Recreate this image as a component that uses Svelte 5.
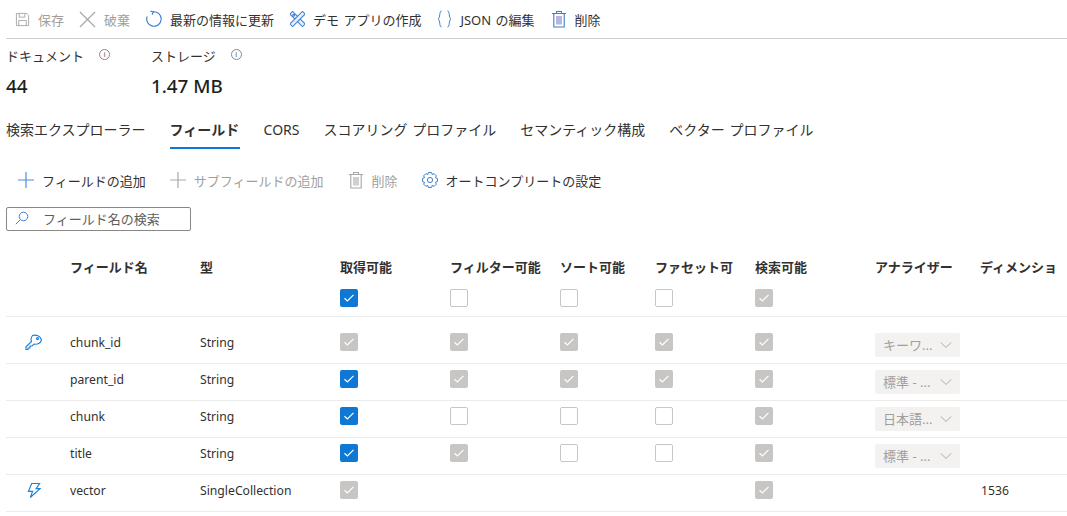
<script>
  const tabs = ['検索エクスプローラー', 'フィールド', 'CORS', 'スコアリング プロファイル', 'セマンティック構成', 'ベクター プロファイル'];
  const headers = ['', 'フィールド名', '型', '取得可能', 'フィルター可能', 'ソート可能', 'ファセット可', '検索可能', 'アナライザー', 'ディメンショ'];
  const rows = [
    { icon: 'key', name: 'chunk_id', type: 'String', checks: ['d', 'd', 'd', 'd', 'd'], an: 'キーワ...' },
    { name: 'parent_id', type: 'String', checks: ['c', 'd', 'd', 'd', 'd'], an: '標準 - ...' },
    { name: 'chunk', type: 'String', checks: ['c', 'e', 'e', 'e', 'd'], an: '日本語...' },
    { name: 'title', type: 'String', checks: ['c', 'd', 'e', 'e', 'd'], an: '標準 - ...' },
    { icon: 'bolt', name: 'vector', type: 'SingleCollection', checks: ['d', '', '', '', 'd'], dim: '1536' }
  ];

  function gearPath(cx, cy, outer, inner, teeth) {
    const pts = [];
    for (let i = 0; i < teeth; i++) {
      const step = (Math.PI * 2) / teeth;
      const a = i * step - Math.PI / 2;
      const o = [[-0.5, inner], [-0.27, outer], [0.27, outer], [0.5, inner]];
      for (const [f, r] of o) {
        const t = a + f * step;
        pts.push((cx + r * Math.cos(t)).toFixed(2) + ' ' + (cy + r * Math.sin(t)).toFixed(2));
      }
    }
    return 'M' + pts.join('L') + 'Z';
  }
  const gear = gearPath(8, 8, 7.6, 5.9, 8);
</script>

{#snippet box(kind)}
  {#if kind}
    <span class="box {kind}">
      {#if kind !== 'e'}
        <svg width="12" height="10" viewBox="0 0 12 10"><path d="M1.5 5.2 4.4 8 10.5 1.8" fill="none" stroke="#fff" stroke-width="1.2" /></svg>
      {/if}
    </span>
  {/if}
{/snippet}

{#snippet trash(color, body)}
  <svg width="16" height="18" viewBox="0 0 16 18" fill="none" stroke={color} stroke-width="1.1">
    <path d="M1 3.5h14M5.5 3.5V1.500h5v2M2.800 3.500V17h10.400V3.500" />
    <rect x="5" y="6" width="6" height="8.500" fill={body} stroke="none" />
  </svg>
{/snippet}

<div class="page">
  <div class="toolbar">
    <button class="tool off save">
      <svg width="15" height="15" viewBox="0 0 16 16" fill="none" stroke="#a8a8a8"><path d="M1.500 1.500h11l2 2v11h-13zM4.500 1.500v4h6v-4M4 14.500V9h8v5.500" /></svg>
      <span>保存</span>
    </button>
    <button class="tool off">
      <svg width="17" height="17" viewBox="0 0 18 18" stroke="#a8a8a8" stroke-width="1.3"><path d="M1 1l16 16M17 1 1 17" /></svg>
      <span>破棄</span>
    </button>
    <button class="tool">
      <svg width="16" height="18" viewBox="0 0 17 18" fill="none" stroke="#3a7fd0" stroke-width="1.200"><path d="M7.500 1.400A7.700 7.700 0 1 1 1.300 6.200" /><path d="M4.800.6 7.800 1.600 6.400 4.400" /></svg>
      <span>最新の情報に更新</span>
    </button>
    <button class="tool">
      <svg width="15" height="16" viewBox="0 0 16 16" fill="none" stroke="#3a7fd0" stroke-width="1.100">
        <rect x="6" y="-1.500" width="4" height="19" transform="rotate(-45 8 8)" fill="#e4eefa" />
        <rect x="6" y="-1.500" width="4" height="19" transform="rotate(45 8 8)" fill="#e4eefa" />
        <circle cx="4" cy="4" r="1" />
      </svg>
      <span>デモ アプリの作成</span>
    </button>
    <button class="tool">
      <svg width="15" height="18" viewBox="0 0 15 18" fill="none" stroke="#3a7fd0" stroke-width="1"><path d="M4.500 1C2 1 3.500 8 1 9c2.500 1 1 8 3.500 8M10.500 1C13 1 11.500 8 14 9c-2.500 1-1 8-3.500 8" /></svg>
      <span>JSON の編集</span>
    </button>
    <button class="tool">
      {@render trash('#3a7fd0', '#b9b6dc')}
      <span>削除</span>
    </button>
  </div>

  <div class="stats">
    <div class="stat s1">
      <div class="label">ドキュメント <i class="info">i</i></div>
      <div class="value">44</div>
    </div>
    <div class="stat">
      <div class="label">ストレージ <i class="info">i</i></div>
      <div class="value">1.47 MB</div>
    </div>
  </div>

  <div class="tabs">
    {#each tabs as t, i}
      <span class="tab" class:active={i === 1}>{t}</span>
    {/each}
  </div>

  <div class="actions">
    <button class="tool">
      <svg width="16" height="16" viewBox="0 0 16 16" stroke="#4a8fe0" stroke-width="1.2"><path d="M8 0v16M0 8h16" /></svg>
      <span>フィールドの追加</span>
    </button>
    <button class="tool off">
      <svg width="16" height="16" viewBox="0 0 16 16" stroke="#a8a8a8" stroke-width="1.2"><path d="M8 0v16M0 8h16" /></svg>
      <span>サブフィールドの追加</span>
    </button>
    <button class="tool off">
      {@render trash('#a8a8a8', '#d0d0d0')}
      <span>削除</span>
    </button>
    <button class="tool">
      <svg width="16" height="16" viewBox="0 0 16 16" fill="none" stroke="#3a7fd0" stroke-width="1"><circle cx="8" cy="8" r="2.600" /><path d={gear} /></svg>
      <span>オートコンプリートの設定</span>
    </button>
  </div>

  <div class="search">
    <svg width="14" height="14" viewBox="0 0 14 14" fill="none" stroke="#3a7fd0"><circle cx="8.500" cy="5.500" r="4.300" /><path d="M5.300 8.700.8 13.200" /></svg>
    <span>フィールド名の検索</span>
  </div>

  <div class="table">
    <div class="row head">
      {#each headers as h}<div class="cell">{h}</div>{/each}
    </div>
    <div class="row filter">
      <div></div><div></div><div></div>
      <div class="cell">{@render box('c')}</div>
      <div class="cell">{@render box('e')}</div>
      <div class="cell">{@render box('e')}</div>
      <div class="cell">{@render box('e')}</div>
      <div class="cell">{@render box('d')}</div>
      <div></div><div></div>
    </div>
    {#each rows as r, i}
      <div class="row body" class:top={i === 0}>
        <div class="cell icon">
          {#if r.icon === 'key'}
            <svg width="18" height="17" viewBox="0 0 18 17" fill="none" stroke="#1b7fdc" stroke-width="1.100"><path d="M7.500 1.500 A 7 7 0 0 1 16.500 6 A 6 6 0 0 1 9 10 L 7 12 L 5 12 L 5 14 L 3 14 L 3 15.500 L 1 15.500 L 1 12.800 L 6.500 7.500 A 6 6 0 0 1 7.500 1.500Z" /><circle cx="12.500" cy="4.600" r="1" /></svg>
          {:else if r.icon === 'bolt'}
            <svg class="bolt" width="14" height="17" viewBox="0 0 15 17" fill="none" stroke="#1b7fdc" stroke-width="1.200"><path d="M5 1h8.500L9.800 6.500H14L3.500 16 6 9.500H1.500z" /></svg>
          {/if}
        </div>
        <div class="cell">{r.name}</div>
        <div class="cell">{r.type}</div>
        {#each r.checks as c}
          <div class="cell">{@render box(c)}</div>
        {/each}
        <div class="cell">
          {#if r.an}
            <span class="select"><span class="sel-text">{r.an}</span>
              <svg width="12" height="6" viewBox="0 0 12 6" fill="none" stroke="#b0aeac"><path d="M.6.4 6 5.400 11.400.4" /></svg>
            </span>
          {/if}
        </div>
        <div class="cell dim">{r.dim ?? ''}</div>
      </div>
    {/each}
  </div>
</div>

<style>
  :global(body) {
    margin: 0;
    background: #fff;
    overflow: hidden;
  }
  .page {
    width: 1067px;
    height: 516px;
    overflow: hidden;
    padding-left: 6px;
    box-sizing: border-box;
    font-family: "Noto Sans", "Noto Sans CJK JP", sans-serif;
    font-size: 13px;
    color: #323130;
  }
  button {
    all: unset;
  }
  .toolbar {
    display: flex;
    align-items: center;
    height: 38px;
    border-bottom: 1px solid #cfcfcf;
    gap: 16px;
    padding-left: 9px;
    font-size: 13px;
    word-spacing: 1px;
  }
  .save {
    margin-right: -1px;
  }
  .tool {
    display: inline-flex;
    align-items: center;
    gap: 8px;
    white-space: nowrap;
  }
  .tool.off {
    color: #a19f9d;
  }
  .stats {
    display: flex;
    height: 71px;
    padding-top: 7px;
    box-sizing: border-box;
  }
  .stat.s1 {
    width: 145px;
  }
  .label {
    font-size: 13px;
    line-height: 20px;
    display: flex;
    gap: 15px;
    align-items: flex-start;
  }
  .info {
    display: inline-flex;
    align-items: center;
    justify-content: center;
    box-sizing: border-box;
    width: 11px;
    height: 11px;
    margin-top: 3px;
    border: 1px solid #8a8886;
    border-radius: 50%;
    font: 8px/1 "Liberation Sans", sans-serif;
    color: #605e5c;
  }
  .value {
    margin-top: 7px;
    font-size: 18.800px;
    font-weight: 500;
    line-height: 26px;
    color: #201f1e;
  }
  .tabs {
    display: flex;
    gap: 24px;
    height: 39px;
    font-size: 14px;
    word-spacing: 1px;
  }
  .tab {
    height: 39px;
    line-height: 39px;
    box-sizing: border-box;
    white-space: nowrap;
  }
  .tab.active {
    width: 70px;
    font-weight: 600;
    border-bottom: 2px solid #0f78d4;
  }
  .actions {
    display: flex;
    align-items: center;
    gap: 24px;
    height: 46px;
    margin-top: 8px;
    padding-left: 12px;
    font-size: 13px;
  }
  .search {
    display: flex;
    align-items: center;
    gap: 14px;
    box-sizing: border-box;
    width: 185px;
    height: 24px;
    margin-top: 4px;
    padding-left: 8px;
    padding-bottom: 2px;
    border: 1px solid #8a8886;
    border-radius: 2px;
    font-size: 13px;
    color: #605e5c;
  }
  .table {
    margin-top: 19px;
  }
  .row {
    display: grid;
    grid-template-columns: 64px 130px 140px 110px 110px 95px 100px 120px 105px 1fr;
    align-items: start;
    border-bottom: 1px solid #ebebeb;
    box-sizing: border-box;
  }
  .cell {
    white-space: nowrap;
    overflow: hidden;
    display: flex;
    align-items: center;
    min-height: 18px;
    font-size: 12.200px;
  }
  .head {
    height: 33px;
    border: 0;
    align-items: center;
  }
  .head .cell {
    font-weight: 600;
    font-size: 13px;
  }
  .filter {
    height: 34px;
    padding-top: 6px;
  }
  .body {
    height: 37px;
    padding-top: 6px;
  }
  .body.top {
    height: 47px;
    padding-top: 16px;
  }
  .icon {
    justify-content: flex-start;
    padding-left: 19px;
  }
  .bolt {
    margin-left: 2px;
  }
  .box {
    display: inline-flex;
    align-items: center;
    justify-content: center;
    box-sizing: border-box;
    width: 18px;
    height: 18px;
    border-radius: 2px;
  }
  .box.c {
    background: #0f78d4;
  }
  .box.d {
    background: #c8c6c4;
  }
  .box.e {
    background: #fff;
    border: 1px solid #c8c6c4;
  }
  .select {
    display: inline-flex;
    align-items: center;
    justify-content: space-between;
    box-sizing: border-box;
    width: 85px;
    height: 24px;
    padding: 0 8px 0 8px;
    background: #f3f2f1;
    border-radius: 2px;
    color: #a19f9d;
    font-size: 13px;
  }
  .sel-text {
    margin-top: -2px;
  }
  .dim {
    padding-left: 1px;
  }
</style>
